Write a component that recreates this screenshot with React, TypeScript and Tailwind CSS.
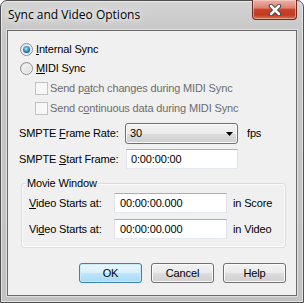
import React from "react";

function Radio({ checked }: { checked?: boolean }) {
  return (
    <span className="flex h-[13px] w-[13px] shrink-0 items-center justify-center rounded-full border border-[#8e8f8f] bg-[linear-gradient(135deg,#d6d6d6_0%,#f4f4f4_60%,#ffffff_100%)]">
      <span className="flex h-[9px] w-[9px] items-center justify-center rounded-full bg-[linear-gradient(135deg,#f6f6f6,#dcdcdc)]">
        {checked && (
          <span className="h-[7px] w-[7px] rounded-full bg-[radial-gradient(circle_at_45%_40%,#b9ecff_0%,#3d9be0_40%,#1a5a9e_70%,#0d2f5c_100%)]" />
        )}
      </span>
    </span>
  );
}

function Check() {
  return (
    <span className="h-[13px] w-[13px] shrink-0 border border-[#c3c3c3] bg-[#f7f7f7]" />
  );
}

function Btn({ children, primary }: { children: React.ReactNode; primary?: boolean }) {
  return (
    <div
      className={
        primary
          ? "flex h-[20px] w-[63px] items-center justify-center rounded-[3px] border border-[#3c7fb1] bg-[linear-gradient(#eaf6fd_0%,#d9f0fc_50%,#bee6fd_51%,#a7d9f5_100%)] shadow-[inset_0_0_0_1px_#cdeaf9]"
          : "flex h-[20px] w-[63px] items-center justify-center rounded-[3px] border border-[#707070] bg-[linear-gradient(#f2f2f2_0%,#ebebeb_50%,#dddddd_51%,#cfcfcf_100%)] shadow-[inset_0_0_0_1px_#fbfbfb]"
      }
    >
      {children}
    </div>
  );
}

export default function App() {
  return (
    <div className="flex h-[303px] w-[304px] flex-col rounded-t-[7px] border border-[#4f4f4f] bg-[linear-gradient(#d3d3d3_0%,#c6c6c6_12%,#c2c2c2_100%)] px-[6px] pb-[6px] font-['Liberation_Sans',Arial,sans-serif] text-[11px] leading-[13px] tracking-[-0.15px] text-black shadow-[inset_0_0_0_1px_rgba(255,255,255,0.55)]">
      <div className="flex h-[29px] items-start justify-between">
        <div className="pl-[1px] pt-[6px] font-['Open_Sans',sans-serif] text-[12px] leading-[16px] tracking-normal [text-shadow:0_0_6px_#ffffff,0_0_10px_#ffffff]">
          Sync and Video Options
        </div>
        <div className="-mt-[1px] flex h-[20px] w-[45px] items-center justify-center rounded-b-[4px] border border-t-0 border-[#6f2a1f] bg-[linear-gradient(#ebb3a8_0%,#de806e_42%,#c9432d_50%,#c33a23_78%,#d9714f_100%)] shadow-[inset_0_0_0_1px_rgba(255,220,210,0.5)]">
          <svg width="14" height="12" viewBox="0 0 14 12">
            <path d="M3 2 L11 10 M11 2 L3 10" stroke="#3b3b3b" strokeWidth="4.4" strokeLinecap="round" />
            <path d="M3 2 L11 10 M11 2 L3 10" stroke="#ffffff" strokeWidth="2.6" strokeLinecap="round" />
          </svg>
        </div>
      </div>

      <div className="flex flex-1 flex-col border border-[#6b6b6b] bg-[#f0f0f0] shadow-[0_0_0_1px_#dedede]">
        <div className="mt-[8px] flex flex-col pl-[12px]">
          <div className="flex h-[20px] items-center gap-[3px]">
            <Radio checked />
            <span>
              <span className="underline">I</span>nternal Sync
            </span>
          </div>
          <div className="flex h-[19px] items-center gap-[3px]">
            <Radio />
            <span>
              <span className="underline">M</span>IDI Sync
            </span>
          </div>
          <div className="flex h-[20px] items-center gap-[2px] pl-[15px] text-[#6d6d6d]">
            <Check />
            <span>
              Send p<span className="underline">a</span>tch changes during MIDI Sync
            </span>
          </div>
          <div className="flex h-[20px] items-center gap-[2px] pl-[15px] text-[#6d6d6d]">
            <Check />
            <span>
              Send c<span className="underline">o</span>ntinuous data during MIDI Sync
            </span>
          </div>
        </div>

        <div className="mt-[5px] flex items-center pl-[11px]">
          <span className="w-[106px]">
            SMPTE <span className="underline">F</span>rame Rate:
          </span>
          <div className="flex h-[21px] w-[113px] items-center justify-between rounded-[3px] border border-[#707070] bg-[linear-gradient(#f2f2f2_0%,#ebebeb_50%,#dddddd_51%,#cfcfcf_100%)] pl-[4px] pr-[4px] shadow-[inset_0_0_0_1px_#fafafa]">
            <span>30</span>
            <svg width="7" height="4" viewBox="0 0 7 4">
              <path d="M0 0 H7 L3.5 4 Z" fill="#000" />
            </svg>
          </div>
          <span className="ml-[9px]">fps</span>
        </div>

        <div className="mt-[5px] flex items-center pl-[11px]">
          <span className="w-[107px]">
            SMPTE <span className="underline">S</span>tart Frame:
          </span>
          <div className="flex h-[20px] w-[112px] items-center border border-[#abadb3] border-x-[#e2e3ea] border-b-[#e3e9ef] bg-white pl-[4px]">
            0:00:00:00
          </div>
        </div>

        <fieldset className="ml-[13px] mt-[7px] w-[265px] rounded-[3px] border border-[#d5dfe5] pb-[8px] pl-[7px] shadow-[inset_0_0_0_1px_#fbfbfb]">
          <legend className="-ml-[3px] px-[1px] leading-[14px]">Movie Window</legend>
          <div className="mt-[3px] flex h-[20px] items-center">
            <span className="w-[85px]">
              <span className="underline">V</span>ideo Starts at:
            </span>
            <div className="flex h-[20px] w-[113px] items-center border border-[#abadb3] border-x-[#e2e3ea] border-b-[#e3e9ef] bg-white pl-[5px]">
              00:00:00.000
            </div>
            <span className="ml-[6px]">in Score</span>
          </div>
          <div className="mt-[6px] flex h-[20px] items-center">
            <span className="w-[85px]">
              Vi<span className="underline">d</span>eo Starts at:
            </span>
            <div className="flex h-[20px] w-[113px] items-center border border-[#abadb3] border-x-[#e2e3ea] border-b-[#e3e9ef] bg-white pl-[5px]">
              00:00:00.000
            </div>
            <span className="ml-[6px]">in Video</span>
          </div>
        </fieldset>

        <div className="mt-[15px] flex justify-end gap-[9px] pr-[10px]">
          <Btn primary>OK</Btn>
          <Btn>Cancel</Btn>
          <Btn>Help</Btn>
        </div>
      </div>
    </div>
  );
}
